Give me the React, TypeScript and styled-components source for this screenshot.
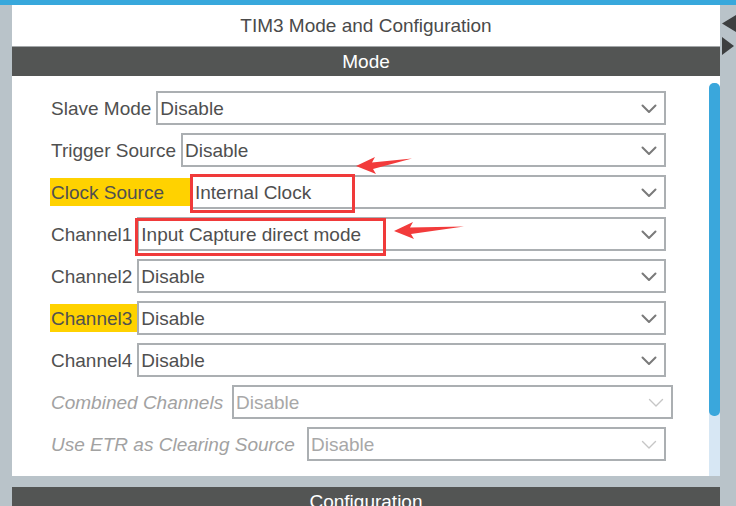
import React from "react";
import styled, { createGlobalStyle } from "styled-components";

const GlobalStyle = createGlobalStyle`
  html, body { margin: 0; padding: 0; }
  body { background: #b9c3c9; font-family: "Liberation Sans", Arial, sans-serif; }
`;

const Page = styled.div`
  position: relative;
  width: 736px;
  height: 506px;
  overflow: hidden;
  background: #b9c3c9;
  display: flex;
  flex-direction: column;
`;

const TopBar = styled.div`
  height: 5px;
  background: #38a8dc;
  flex: none;
`;

const Body = styled.div`
  flex: 1;
  display: flex;
  min-height: 0;
  overflow: hidden;
`;

const LeftStrip = styled.div`
  width: 12px;
  flex: none;
`;

const Main = styled.div`
  width: 708px;
  flex: none;
  display: flex;
  flex-direction: column;
`;

const RightStrip = styled.div`
  flex: 1;
  padding: 5px 0 0 2px;
`;

const Title = styled.div`
  height: 42px;
  flex: none;
  background: #fff;
  border-bottom: 1px solid #a3a7a9;
  display: flex;
  align-items: center;
  justify-content: center;
  font-size: 19px;
  color: #4a4a4a;
  padding-top: 1px;
  box-sizing: border-box;
`;

const SectionHeader = styled.div<{ $gap?: number }>`
  height: 29px;
  flex: none;
  margin-top: ${(p) => p.$gap ?? 0}px;
  background: #535554;
  color: #fff;
  font-size: 19px;
  display: flex;
  align-items: center;
  justify-content: center;
`;

const Content = styled.div`
  height: 400px;
  flex: none;
  background: #fff;
  display: flex;
`;

const Form = styled.div`
  flex: 1;
  padding: 15px 43px 0 38px;
  display: flex;
  flex-direction: column;
  gap: 8px;
`;

const Row = styled.div`
  height: 34px;
  flex: none;
  display: flex;
  align-items: center;
`;

const Label = styled.div<{ $highlight?: boolean; $disabled?: boolean; $minWidth?: number }>`
  flex: none;
  height: 28px;
  line-height: 29px;
  padding: 0 5px 0 1px;
  min-width: ${(p) => (p.$minWidth ? `${p.$minWidth}px` : "auto")};
  box-sizing: border-box;
  font-size: 19px;
  white-space: nowrap;
  background: ${(p) => (p.$highlight ? "#ffd200" : "transparent")};
  color: ${(p) => (p.$disabled ? "#a2a2a2" : "#505050")};
  font-style: ${(p) => (p.$disabled ? "italic" : "normal")};
`;

const SelectBox = styled.div<{ $disabled?: boolean; $extend?: number }>`
  flex: 1;
  height: 34px;
  box-sizing: border-box;
  margin-right: ${(p) => -(p.$extend ?? 0)}px;
  border: 2px solid #abafb2;
  background: #fff;
  display: flex;
  align-items: center;
  padding: 1px 7px 0 2px;
  font-size: 19px;
  color: ${(p) => (p.$disabled ? "#a8a8a8" : "#4f4f4f")};
`;

const SelectText = styled.span`
  flex: 1;
  white-space: nowrap;
`;

const ScrollColumn = styled.div`
  width: 11px;
  flex: none;
  padding-top: 7px;
  display: flex;
  flex-direction: column;
`;

const Track = styled.div`
  flex: 1;
  background: #d7e7f4;
  border-radius: 5px 5px 0 0;
`;

const Thumb = styled.div`
  height: 333px;
  background: #3aa7dc;
  border-radius: 5px;
`;

const Overlay = styled.svg`
  position: absolute;
  left: 0;
  top: 0;
  pointer-events: none;
`;

const Chevron: React.FC<{ disabled?: boolean }> = ({ disabled }) => (
  <svg width="16" height="10" viewBox="0 0 16 10">
    <path
      d="M1.5 1.5 L8 8 L14.5 1.5"
      fill="none"
      stroke={disabled ? "#c6c6c6" : "#7a7a7a"}
      strokeWidth={disabled ? 1.4 : 2}
      strokeLinecap="round"
      strokeLinejoin="round"
    />
  </svg>
);

type RowData = {
  label: string;
  value: string;
  highlight?: boolean;
  disabled?: boolean;
  minWidth?: number;
  extend?: number;
};

const rows: RowData[] = [
  { label: "Slave Mode", value: "Disable" },
  { label: "Trigger Source", value: "Disable" },
  { label: "Clock Source", value: "Internal Clock", highlight: true, minWidth: 141 },
  { label: "Channel1", value: "Input Capture direct mode" },
  { label: "Channel2", value: "Disable" },
  { label: "Channel3", value: "Disable", highlight: true },
  { label: "Channel4", value: "Disable" },
  { label: "Combined Channels", value: "Disable", disabled: true, extend: 7, minWidth: 182 },
  { label: "Use ETR as Clearing Source", value: "Disable", disabled: true, minWidth: 257 },
];

export default function App() {
  return (
    <>
      <GlobalStyle />
      <Page>
        <TopBar />
        <Body>
          <LeftStrip />
          <Main>
            <Title>TIM3 Mode and Configuration</Title>
            <SectionHeader>Mode</SectionHeader>
            <Content>
              <Form>
                {rows.map((r) => (
                  <Row key={r.label}>
                    <Label $highlight={r.highlight} $disabled={r.disabled} $minWidth={r.minWidth}>
                      {r.label}
                    </Label>
                    <SelectBox $disabled={r.disabled} $extend={r.extend}>
                      <SelectText>{r.value}</SelectText>
                      <Chevron disabled={r.disabled} />
                    </SelectBox>
                  </Row>
                ))}
              </Form>
              <ScrollColumn>
                <Track>
                  <Thumb />
                </Track>
              </ScrollColumn>
            </Content>
            <SectionHeader $gap={11}>Configuration</SectionHeader>
          </Main>
          <RightStrip>
            <svg width="14" height="46" viewBox="0 0 14 46">
              <polygon points="0,13.5 14,5 14,22" fill="#3d3f40" />
              <polygon points="0,27 12,36 0,45" fill="#3d3f40" />
            </svg>
          </RightStrip>
        </Body>
        <Overlay width="736" height="506" viewBox="0 0 736 506">
          <rect x="191.5" y="175.5" width="162" height="36" fill="none" stroke="#f03a3a" strokeWidth="3" />
          <rect x="136.5" y="219.5" width="248" height="35" fill="none" stroke="#f03a3a" strokeWidth="3" />
          <polygon points="356,166 375,157 372,162.5 412,158.5 373,169 376,174" fill="#f23b3b" />
          <polygon points="394,231 413,222 410,227.5 464,226.5 411,234 414,239" fill="#f23b3b" />
        </Overlay>
      </Page>
    </>
  );
}
